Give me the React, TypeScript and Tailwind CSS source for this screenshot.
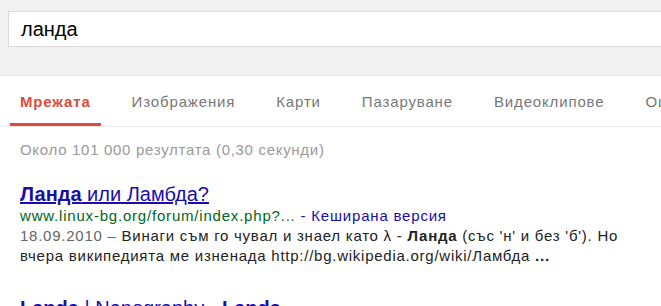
import { type FC } from "react";

const tabs = ["Изображения", "Карти", "Пазаруване", "Видеоклипове", "Още"];

const SearchHeader: FC = () => (
  <div className="h-[76px] border-b border-[#e5e5e5] bg-[#f1f1f1] pl-[8px] pt-[11px]">
    <div className="flex h-[36px] items-center border border-[#d9d9d9] border-r-0 bg-white pl-[12px] text-[20px] text-black">
      ланда
    </div>
  </div>
);

const Tabs: FC = () => (
  <div className="flex h-[51px] items-stretch gap-[21px] overflow-hidden whitespace-nowrap border-b border-[#ebebeb] pl-[10px] text-[15px] tracking-[0.85px] text-[#777]">
    <div className="-mb-px flex items-center border-b-[4px] border-[#dd4b39] px-[10px] pt-[5px] font-bold text-[#dd4b39]">
      Мрежата
    </div>
    {tabs.map((t) => (
      <div key={t} className="flex items-center px-[10px] pt-[2px]">
        {t}
      </div>
    ))}
  </div>
);

export default function App() {
  return (
    <div className="h-[306px] w-[661px] overflow-hidden bg-white font-['Liberation_Sans',Arial,sans-serif]">
      <SearchHeader />
      <Tabs />
      <div className="pl-[20px]">
        <div className="pt-[12px] text-[15px] tracking-[0.7px] text-[#999]">
          Около 101 000 резултата (0,30 секунди)
        </div>
        <div className="mt-[20px]">
          <div className="text-[20px] leading-[24px] text-[#1a0dab] underline">
            <b>Ланда</b> или Ламбда?
          </div>
          <div className="text-[15px] leading-[20px] tracking-[0.8px] text-[#006621]">
            www.linux-bg.org/forum/index.php?... <span className="text-[#1a0dab]">- Кеширана версия</span>
          </div>
          <div className="whitespace-nowrap text-[15px] leading-[20px] tracking-[0.75px] text-[#222]">
            <span className="text-[#666]">18.09.2010 – </span>Винаги съм го чувал и знаел като λ - <b>Ланда</b> (със 'н' и без 'б'). Но
            <br />
            вчера википедията ме изненада http://bg.wikipedia.org/wiki/Ламбда <b>...</b>
          </div>
        </div>
        <div className="mt-[30px] text-[20px] leading-[24px] text-[#1a0dab] underline">
          <b>Landa</b> | Nanography - <b>Landa</b>
        </div>
      </div>
    </div>
  );
}
